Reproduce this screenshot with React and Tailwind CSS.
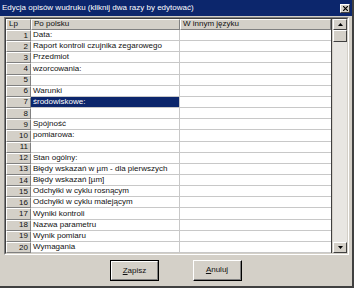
const ROWS = [
  'Data:',
  'Raport kontroli czujnika zegarowego',
  'Przedmiot',
  'wzorcowania:',
  '',
  'Warunki',
  'środowiskowe:',
  '',
  'Spójność',
  'pomiarowa:',
  '',
  'Stan ogólny:',
  'Błędy wskazań w µm - dla pierwszych',
  'Błędy wskazań [µm]',
  'Odchyłki w cyklu rosnącym',
  'Odchyłki w cyklu malejącym',
  'Wyniki kontroli',
  'Nazwa parametru',
  'Wynik pomiaru',
  'Wymagania',
]

function Arrow({ down }) {
  return (
    <svg width="5" height="3" viewBox="0 0 5 3" className={down ? 'rotate-180' : ''}>
      <path d="M2.5 0 L5 3 L0 3 Z" fill="#000" />
    </svg>
  )
}

export default function App() {
  return (
    <div className="w-[354px] h-[288px] bg-[#d4d0c8] border-r-2 border-b-2 border-r-[#404040] border-b-[#404040] flex flex-col font-['Liberation_Sans',Arial,sans-serif] text-[8px] text-[#111] leading-none">
      {/* pasek tytułu */}
      <div className="h-[16px] bg-[#0c266c] text-white flex items-center justify-between pl-[2px] pr-[2px]">
        <span className="text-[8px]">Edycja opisów wudruku (kliknij dwa razy by edytować)</span>
        <div className="w-[10px] h-[9px] bg-[#d4d0c8] border-t border-l border-t-white border-l-white border-b border-r border-b-[#404040] border-r-[#404040] flex items-center justify-center">
          <svg width="5" height="5" viewBox="0 0 5 5">
            <path d="M0 0 L5 5 M5 0 L0 5" stroke="#000" strokeWidth="1.2" />
          </svg>
        </div>
      </div>

      {/* siatka */}
      <div className="mt-[1px] ml-[4px] mr-[3px] h-[238px] flex border border-t-[#808080] border-l-[#808080] border-b-white border-r-white">
        <div className="flex-1 flex border border-t-[#404040] border-l-[#404040] border-b-[#d4d0c8] border-r-[#d4d0c8] bg-white">
          <div className="w-[326px] flex flex-col border-r border-r-[#404040]">
            <div className="flex h-[11px]">
              <div className="w-[25px] bg-[#d4d0c8] border-t border-l border-t-white border-l-white border-b border-r border-b-[#808080] border-r-[#808080] flex items-center pl-[2px]">Lp</div>
              <div className="w-[149px] bg-[#d4d0c8] border-t border-l border-t-white border-l-white border-b border-r border-b-[#808080] border-r-[#808080] flex items-center pl-[2px]">Po polsku</div>
              <div className="flex-1 bg-[#d4d0c8] border-t border-l border-t-white border-l-white border-b border-r border-b-[#808080] border-r-[#808080] flex items-center pl-[2px]">W innym języku</div>
            </div>
            {ROWS.map((text, i) => {
              const selected = i === 6
              return (
                <div key={i} className="flex h-[11.2px]">
                  <div className="w-[25px] bg-[#d4d0c8] border-t border-l border-t-white border-l-white border-b border-r border-b-[#808080] border-r-[#808080] flex items-center justify-end pr-[2px]">{i + 1}</div>
                  <div className={`w-[149px] border-b border-r border-[#c8c8c8] flex items-center pl-[2px] whitespace-nowrap overflow-hidden ${selected ? 'bg-[#0c266c] text-white' : ''}`}>{text}</div>
                  <div className="flex-1 border-b border-[#c8c8c8]" />
                </div>
              )
            })}
          </div>
          {/* pasek przewijania */}
          <div className="flex-1 flex flex-col bg-[#e8e6e2] border-l border-l-[#d4d0c8]">
            <div className="h-[11px] bg-[#d4d0c8] border-t border-l border-t-white border-l-white border-b border-r border-b-[#404040] border-r-[#404040] flex items-center justify-center">
              <Arrow />
            </div>
            <div className="h-[12px] bg-[#d4d0c8] border-t border-l border-t-white border-l-white border-b border-r border-b-[#404040] border-r-[#404040]" />
            <div className="flex-1" />
            <div className="h-[11px] bg-[#d4d0c8] border-t border-l border-t-white border-l-white border-b border-r border-b-[#404040] border-r-[#404040] flex items-center justify-center">
              <Arrow down />
            </div>
          </div>
        </div>
      </div>

      {/* przyciski */}
      <div className="mt-[5px] flex justify-center gap-[34px]">
        <div className="w-[49px] h-[21px] border border-black">
          <div className="w-full h-full border-t border-l border-t-white border-l-white border-b border-r border-b-[#808080] border-r-[#808080] flex items-center justify-center">
            <span><span className="underline">Z</span>apisz</span>
          </div>
        </div>
        <div className="w-[49px] h-[21px] border-t border-l border-t-white border-l-white border-b border-r border-b-black border-r-black">
          <div className="w-full h-full border-b border-r border-b-[#808080] border-r-[#808080] flex items-center justify-center">
            <span><span className="underline">A</span>nuluj</span>
          </div>
        </div>
      </div>
    </div>
  )
}
